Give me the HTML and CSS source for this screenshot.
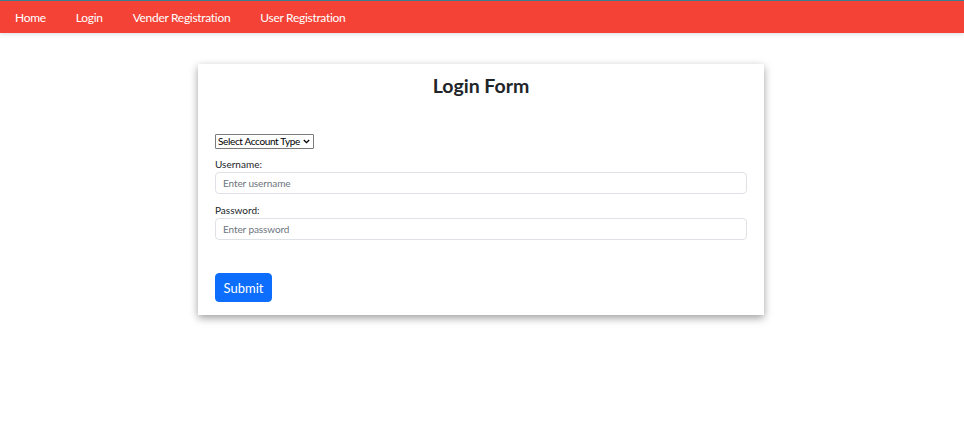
FILE: index.html
```html
<!DOCTYPE html>
<html>
<head>
<meta charset="utf-8">
<link rel="stylesheet" href="styles.css">
</head>
<body>
<nav class="navbar">
  <a class="nav-link" href="#">Home</a>
  <a class="nav-link" href="#">Login</a>
  <a class="nav-link" href="#">Vender Registration</a>
  <a class="nav-link" href="#">User Registration</a>
</nav>
<main class="page">
  <form class="card">
    <h1 class="title">Login Form</h1>
    <select class="account-select">
      <option>Select Account Type</option>
    </select>
    <label class="label">Username:</label>
    <input class="input" type="text" placeholder="Enter username">
    <label class="label">Password:</label>
    <input class="input" type="password" placeholder="Enter password">
    <button class="submit" type="button">Submit</button>
  </form>
</main>
</body>
</html>
```
FILE: styles.css
```css
* { box-sizing: border-box; }
html, body { margin: 0; padding: 0; background: #fff; }
body { font-family: Lato, "Open Sans", sans-serif; color: #212529; min-height: 448px; }
.navbar {
  display: flex;
  align-items: center;
  height: 33px;
  background: #f44336;
  border-top: 1px solid #3b7f8f;
  padding-left: 15px;
  box-shadow: 0 1px 4px rgba(0,0,0,0.15);
}
.nav-link {
  color: #fff;
  text-decoration: none;
  font-size: 12px;
  letter-spacing: -0.3px;
  margin-right: 30px;
}
.page {
  display: flex;
  justify-content: center;
  padding-top: 31px;
  padding-right: 2px;
  padding-bottom: 60px;
}
.card {
  width: 566px;
  background: #fff;
  box-shadow: 0 3px 8px rgba(0,0,0,0.38);
  padding: 10px 17px 13px 17px;
  display: flex;
  flex-direction: column;
  align-items: flex-start;
}
.title {
  align-self: stretch;
  text-align: center;
  font-size: 19.5px;
  font-weight: 700;
  margin: 0 0 36px 0;
  line-height: 24px;
  color: #212529;
}
.account-select {
  -webkit-appearance: none;
  appearance: none;
  font-family: Lato, sans-serif;
  font-size: 10px;
  letter-spacing: -0.35px;
  height: 15px;
  width: 99px;
  padding: 0 0 0 2px;
  border: 1px solid #7a7a7a;
  border-radius: 1px;
  background: #fff url("data:image/svg+xml,%3Csvg xmlns='http://www.w3.org/2000/svg' width='7' height='5' viewBox='0 0 7 5'%3E%3Cpath d='M0.8 1 L3.5 3.7 L6.2 1' fill='none' stroke='%23000' stroke-width='1.3'/%3E%3C/svg%3E") no-repeat right 3px center;
  color: #000;
  margin-bottom: 9px;
  line-height: 13px;
}
.label {
  font-size: 10px;
  line-height: 13px;
  margin-bottom: 1px;
}
.input {
  width: 100%;
  height: 22px;
  border: 1px solid #dee2e6;
  border-radius: 4px;
  padding: 0 7px;
  font-family: Lato, sans-serif;
  font-size: 10px;
  letter-spacing: -0.1px;
  margin-bottom: 10px;
}
.input::placeholder { color: #6c757d; }
.submit {
  margin-top: 23px;
  background: #0d6efd;
  color: #fff;
  border: 1px solid #0d6efd;
  border-radius: 4px;
  font-family: Lato, sans-serif;
  font-size: 13px;
  width: 57px;
  height: 29px;
  padding: 0;
}
```
